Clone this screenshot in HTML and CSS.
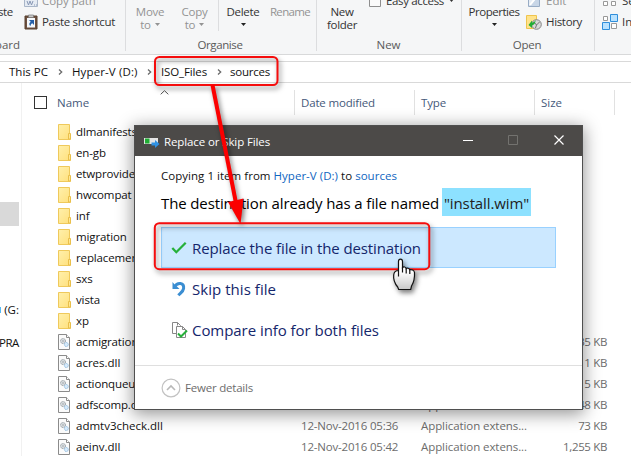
FILE: index.html
```html
<!DOCTYPE html>
<html lang="en">
<head>
<meta charset="utf-8">
<title>Replace or Skip Files</title>
<link rel="stylesheet" href="styles.css">
</head>
<body>
<svg class="defs" width="0" height="0">
  <defs>
    <linearGradient id="fold" x1="0" y1="0" x2="1" y2="1"><stop offset="0" stop-color="#fff0ac"/><stop offset="1" stop-color="#ffe07c"/></linearGradient>
    <linearGradient id="hand" x1="0" y1="0" x2="0" y2="1"><stop offset="0.4" stop-color="#fff"/><stop offset="1" stop-color="#c8c8c8"/></linearGradient>
    <symbol id="folder" viewBox="0 0 14 16"><path d="M.5.5h11v9.300l1 .7v5h-12z" fill="url(#fold)" stroke="#efc95b"/><path d="M10.500 15v-5.500h2V15z" fill="#ffe793" stroke="#e9bf4b"/></symbol>
    <symbol id="dll" viewBox="0 0 14 16"><path d="M.5.5h8l3 3v12H.5z" fill="#fbfbfb" stroke="#8b8b8b"/><path d="M8.500.5v3h3" fill="#fff" stroke="#8b8b8b"/><circle cx="5" cy="7" r="2.500" fill="#dfe3e6" stroke="#8c949a" stroke-dasharray="1.200 .6"/><circle cx="5" cy="7" r=".9" fill="#fff" stroke="#8c949a" stroke-width=".6"/><circle cx="8.300" cy="10.500" r="2" fill="#d7eafa" stroke="#83b3da" stroke-dasharray="1 .6"/></symbol>
    <symbol id="chev" viewBox="0 0 5 8"><path d="M1 1.500 3.700 4 1 6.500" fill="none" stroke="#6b6b6b" stroke-width="1.300"/></symbol>
    <symbol id="caret" viewBox="0 0 5 3"><path d="M0 0h5L2.500 3z" fill="currentColor"/></symbol>
  </defs>
</svg>
<div class="window">
  <div class="ribbon">
    <section class="group clip">
      <div class="cells">
        <span class="ste">ste</span>
        <div class="items">
          <div class="item dim"><svg width="14" height="14" viewBox="0 0 14 14"><path d="M.5 0v12.500h13V0" fill="#e5ebf3" stroke="#a9b6c8"/><path d="m3 7 1.500 4L6 7l1.500 4L9 7M10 11h1M12 11h1" fill="none" stroke="#8898b5"/></svg><span class="t-path">Copy path</span></div>
          <div class="item"><svg width="14" height="16" viewBox="0 0 14 16"><path d="M1 2h12v13H1z" fill="#6e5140" stroke="#57402f"/><path d="M3 4h8v9.500H3z" fill="#f4f8fc"/><path d="M4.500 1h5v2.500h-5z" fill="#c6c6c6" stroke="#777" stroke-width=".7"/><path d="M5 6h5v5L8.300 9.300C7 10 6.600 11 6.500 12.300 4.600 10.500 5.200 8.700 6.700 7.700z" fill="#245fa8"/></svg><span class="t-paste">Paste shortcut</span></div>
        </div>
      </div>
      <div class="label">oard</div>
    </section>
    <section class="group org">
      <div class="bigs">
        <div class="big dim move"><span>Move</span><span>to <svg width="5" height="3"><use href="#caret"/></svg></span></div>
        <div class="big dim copy"><span>Copy</span><span>to <svg width="5" height="3"><use href="#caret"/></svg></span></div>
        <div class="big del"><span>Delete</span><svg width="5" height="3"><use href="#caret"/></svg></div>
        <div class="big dim ren"><span>Rename</span></div>
      </div>
      <div class="label t-org">Organise</div>
    </section>
    <section class="group new">
      <div class="newrow">
        <div class="big"><span>New</span><span>folder</span></div>
        <div class="item easy"><svg width="12" height="12" viewBox="0 0 12 12"><path d="M.5.5h11v11H.5z" fill="#fafafa" stroke="#8e8e8e"/></svg><span>Easy access</span><svg class="up" width="5" height="3"><use href="#caret"/></svg></div>
      </div>
      <div class="label">New</div>
    </section>
    <section class="group open">
      <div class="newrow">
        <div class="big"><span class="t-prop">Properties</span><svg width="5" height="3"><use href="#caret"/></svg></div>
        <div class="items">
          <div class="item dim"><svg width="16" height="14" viewBox="0 0 16 14"><path d="M2.500 0v12.500h11V0" fill="#e7edf5" stroke="#98acc5"/><path d="M3 12 13 2v10z" fill="#c8d6e7"/><path d="m4 11 8-10" stroke="#fff" stroke-width="2"/></svg><span>Edit</span></div>
          <div class="item"><svg width="16" height="16" viewBox="0 0 16 16"><path d="M.5 1.500h10v13H.5z" fill="#ffe38b" stroke="#efc44e"/><circle cx="10.500" cy="10.500" r="4.800" fill="#d9d9d9" stroke="#858585"/><path d="m8 8 2.500 3 3-3M10.500 11l-1 3" fill="none" stroke="#666" stroke-width=".9"/><path d="M2.500 11 6 6.500v2.300c2-.4 3-1.500 3.500-2.800C9.800 9 8 11 6 11.500V14z" fill="#23ad35"/></svg><span class="t-hist">History</span></div>
        </div>
      </div>
      <div class="label">Open</div>
    </section>
    <section class="group sel">
      <div class="items">
        <div class="item"><svg width="16" height="14" viewBox="0 0 16 14"><path d="M1.500 7.500h4v4h-4zM9.500 7.500h4v4h-4z" fill="#fff" stroke="#999"/></svg><span>Se</span></div>
        <div class="item"><svg width="16" height="16" viewBox="0 0 16 16"><path d="M1.500 2.500h4v4h-4zM9.500 9.500h5v5h-5z" fill="#fff" stroke="#999"/><path d="M8.500.5h7v7h-7zM.5 8.500h7v7h-7z" fill="#b9e2ff" stroke="#2f8edb"/></svg><span>In</span></div>
      </div>
    </section>
  </div>
  <div class="address">
    <span class="c1">This PC</span><svg class="a1" width="5" height="8"><use href="#chev"/></svg>
    <span class="c2">Hyper-V (D:)</span><svg class="a2" width="5" height="8"><use href="#chev"/></svg>
    <span class="c3">ISO_Files</span><svg class="a3" width="5" height="8"><use href="#chev"/></svg>
    <span class="c4">sources</span>
  </div>
  <div class="main">
    <nav class="nav">
      <div class="current"></div>
      <div class="drive"><i></i>(G:</div>
      <div class="supra">PRA</div>
    </nav>
    <div class="files">
      <div class="head">
        <div class="h-name"><span class="check"></span>Name<svg class="sort" width="9" height="5" viewBox="0 0 9 5"><path d="M.7 4.300 4.500.7l3.800 3.600" fill="none" stroke="#555"/></svg></div>
        <div class="h-date">Date modified</div><div class="h-type">Type</div><div class="h-size">Size</div>
      </div>
      <div class="row"><svg><use href="#folder"/></svg><span class="name">dlmanifests</span></div>
      <div class="row"><svg><use href="#folder"/></svg><span class="name">en-gb</span></div>
      <div class="row"><svg><use href="#folder"/></svg><span class="name">etwproviders</span></div>
      <div class="row"><svg><use href="#folder"/></svg><span class="name">hwcompat</span></div>
      <div class="row"><svg><use href="#folder"/></svg><span class="name">inf</span></div>
      <div class="row"><svg><use href="#folder"/></svg><span class="name">migration</span></div>
      <div class="row"><svg><use href="#folder"/></svg><span class="name">replacement</span></div>
      <div class="row"><svg><use href="#folder"/></svg><span class="name">sxs</span></div>
      <div class="row"><svg><use href="#folder"/></svg><span class="name">vista</span></div>
      <div class="row"><svg><use href="#folder"/></svg><span class="name">xp</span></div>
      <div class="row"><svg><use href="#dll"/></svg><span class="name">acmigration</span><span class="size">35 KB</span></div>
      <div class="row"><svg><use href="#dll"/></svg><span class="name n0">acres.dll</span><span class="size">1 KB</span></div>
      <div class="row"><svg><use href="#dll"/></svg><span class="name">actionqueue</span><span class="size">5 KB</span></div>
      <div class="row"><svg><use href="#dll"/></svg><span class="name">adfscomp.dll</span><span class="date"></span><span class="type">Application extens...</span><span class="size">48 KB</span></div>
      <div class="row"><svg><use href="#dll"/></svg><span class="name n0">admtv3check.dll</span><span class="date">12-Nov-2016 05:36</span><span class="type">Application extens...</span><span class="size">73 KB</span></div>
      <div class="row"><svg><use href="#dll"/></svg><span class="name n0">aeinv.dll</span><span class="date">12-Nov-2016 05:42</span><span class="type">Application extens...</span><span class="size">1,255 KB</span></div>
    </div>
  </div>

  <div class="dialog">
    <div class="bar">
      <svg width="16" height="12" viewBox="0 0 16 12"><path d="M0 2h14v6H0z" fill="#e4e4e4"/><path d="M1 2.500h4.500v5H1z" fill="#1fae33"/><path d="M7.500 6.500h3.500V4l4.500 4-4.500 4V9.500H7.500z" fill="#2f91e2"/></svg>
      <span class="t-title">Replace or Skip Files</span>
      <svg class="ctl" width="101" height="12" viewBox="0 0 101 12"><path d="M0 6.500h10" stroke="#fff"/><path d="M45.500 1.500h9v9h-9z" fill="none" stroke="#73726f"/><path d="m91.500 1.500 9 9m0-9-9 9" stroke="#fff" stroke-width="1.200"/></svg>
    </div>
    <div class="body">
      <div class="copying">Copying 1 item from <a>Hyper-V (D:)</a> to <a>sources</a></div>
      <div class="msg"><span>The destination already has a file named</span><mark>"install.wim"</mark></div>
      <div class="opt hot"><svg width="18" height="16" viewBox="0 0 18 16"><path d="m2.300 8 4 4.200 9.400-9.400" fill="none" stroke="#27b03a" stroke-width="2.300"/></svg><span>Replace the file in the destination</span></div>
      <div class="opt"><svg width="18" height="18" viewBox="0 0 18 18"><path d="M4.500 6.800C7.500 2 14.300 2.500 13.600 8.500 13.200 11.500 11 12.500 8.300 15.300" fill="none" stroke="#3b8ed2" stroke-width="3"/><path d="M2.500 2v7h7L7.500 7 5 5z" fill="#3b8ed2"/></svg><span class="t-skip">Skip this file</span></div>
      <div class="opt"><svg width="18" height="18" viewBox="0 0 18 18"><path d="M2.500 1.500h5l3 3v8h-8z" fill="#fff" stroke="#888"/><path d="M6.500 5.500h6l3 3v8h-9z" fill="#fff" stroke="#888"/><path d="M12.500 5.500v3h3M7.500 1.500v3" fill="none" stroke="#888"/><path d="m8 12.500 3 3 6-6" fill="none" stroke="#27b03a" stroke-width="2"/></svg><span class="t-comp">Compare info for both files</span></div>
    </div>
    <div class="foot"><svg width="20" height="20" viewBox="0 0 20 20"><circle cx="10" cy="10" r="8.900" fill="none" stroke="#c2c2c2" stroke-width="1.200"/><path d="m6 12 4-4 4 4" fill="none" stroke="#b8b8b8" stroke-width="1.600"/></svg><span>Fewer details</span></div>
  </div>

  <svg class="marks" width="631" height="456" viewBox="0 0 631 456">
    <g class="shade">
      <rect x="155" y="57" width="122.500" height="28" rx="4.500" fill="none" stroke="#f50d0d" stroke-width="2"/>
      <rect x="154.800" y="223.200" width="274.500" height="46" rx="4.500" fill="none" stroke="#f50d0d" stroke-width="2"/>
      <path d="M212.500 85 236 203" stroke="#fb0000" stroke-width="4"/>
      <path d="m228 202 15.500-3.500L240.500 224z" fill="#fb0000"/>
    </g>
    <g class="shade"><path d="M398.500 276.500v-15c0-3.300 4-3.300 4 0v6c1-1 3.300-.6 3.600 1 1.200-.8 3.300-.3 3.600 1.300 1.500-.6 4.500.2 4.800 2.700.3 5-.2 9-3 13.500l-.8 3.500h-12l-1-2.500c-3-3.500-4.500-7.500-4-12 .3-3 2.300-4.500 4.800-4.500z" fill="url(#hand)" stroke="#111" stroke-width="1.200"/><path d="M402.500 267v5.500M406.200 268.500v5M409.800 269.500v4.500" stroke="#111" stroke-width="1.200"/></g>
  </svg>
</div>
</body>
</html>
```
FILE: styles.css
```css
* { box-sizing: border-box; }
body { margin: 0; background: #fff; font: 11.5px/13px "Open Sans", sans-serif; color: #111; overflow: hidden; }
svg { display: block; flex: none; overflow: visible; }
.defs { position: absolute; }
.window { position: relative; width: 631px; height: 456px; overflow: hidden; white-space: nowrap; }
.dim { color: #939393; }

.ribbon { display: flex; height: 55px; background: #f5f6f7; border-bottom: 1px solid #d8d9da; color: #333; }
.group { display: flex; flex-direction: column; justify-content: space-between; height: 51px; border-right: 1px solid #dcdddf; flex: none; }
.group.sel { border: 0; flex: 1; overflow: hidden; }
.label { color: #5a5a5a; text-align: center; line-height: 13px; }
.items { display: flex; flex-direction: column; }
.item { display: flex; align-items: center; gap: 4px; height: 21px; }
.items .item:first-child { margin-top: -10px; }
.clip { width: 126px; }
.clip .label { text-align: left; margin-left: -5px; }
.cells { display: flex; }
.ste { width: 24px; padding-top: 5px; margin-left: -2px; margin-right: 2px; letter-spacing: -.4px; }
.t-path { letter-spacing: -.1px; }
.t-paste { letter-spacing: -.3px; }
.t-org { letter-spacing: -.4px; padding-right: 2px; }
.t-prop { letter-spacing: -.47px; }
.t-hist { letter-spacing: -.33px; }
.org { width: 191px; padding-top: 5px; }
.bigs { display: flex; }
.big { display: flex; flex-direction: column; align-items: center; text-align: center; letter-spacing: -.3px; }
.big > span { display: flex; align-items: center; gap: 4px; }
.big > svg { margin-top: 5px; color: #222; }
.move { width: 48px; }
.copy { width: 45px; border-right: 1px solid #dcdddf; margin-top: -5px; padding: 5px 3px 0 0; }
.del { width: 48px; }
.ren { width: 49px; letter-spacing: -.65px; padding-right: 3px; }
.new { width: 145px; }
.newrow { display: flex; height: 32px; }
.newrow .big { padding-top: 5px; }
.new .big { width: 50px; }
.easy { margin: -10px 0 0 2px; gap: 5px; letter-spacing: -.35px; }
.easy .up { margin-top: -1px; }
.open { width: 133px; }
.open .big { width: 64px; }
.new .label { padding-right: 1px; }
.open .label { padding-right: 2px; letter-spacing: -.2px; }
.sel .items { padding-left: 7px; }

.address { display: flex; align-items: center; height: 22px; margin-top: 6px; padding: 0 0 1px 9px; border: 1px solid #d9d9d9; border-width: 1px 0; color: #111; }
.address svg { margin: 1px 9px 0 10px; }
.address .a1 { margin-right: 9px; }
.address .a3 { margin-right: 8px; }
.c1 { width: 39px; }
.c2 { width: 65px; letter-spacing: .12px; }
.c3 { width: 46px; letter-spacing: -.13px; }
.c4 { width: 40px; letter-spacing: -.22px; }

.main { display: flex; height: 373px; }
.nav { width: 22px; height: 373px; border-right: 1px solid #f1f1f1; padding-right: 2px; overflow: hidden; flex: none; }
.current { height: 24px; margin: 119px 0 0; background: #d9d9d9; }
.drive { display: flex; height: 14px; margin-top: 77px; gap: 4px; }
.drive i { width: 1px; height: 6px; margin-top: 4px; background: #55b9f3; }
.supra { margin-top: 19px; letter-spacing: -.5px; margin-left: -1px; }
.files { flex: 1; padding-top: 7px; }
.head { display: flex; height: 25px; color: #45597a; line-height: 25px; margin-bottom: 6px; }
.head > div { border-right: 1px solid #e1e1e1; padding-left: 6px; }
.h-name { position: relative; width: 273px; display: flex; align-items: center; }
.head > .h-name { padding-left: 12px; }
.check { width: 13px; height: 13px; border: 1px solid #333; margin-right: 10px; }
.sort { position: absolute; left: 138px; top: 0; }
.h-date { width: 120px; letter-spacing: -.16px; }
.h-type { width: 120px; letter-spacing: -.15px; }
.h-size { width: 80px; }
.row { display: flex; align-items: center; height: 21px; padding-left: 36px; color: #6d6d6d; }
.row svg { width: 14px; height: 16px; margin-right: 4px; }
.name { width: 225px; color: #111; letter-spacing: -.13px; }
.n0 { letter-spacing: 0; }
.date { width: 120px; letter-spacing: -.19px; }
.type { width: 120px; letter-spacing: -.08px; }
.size { margin-left: auto; margin-right: 24px; letter-spacing: -.35px; }

.dialog { position: absolute; left: 134px; top: 125px; width: 449px; height: 285px; background: #fff; border: 1px solid #4f4f4f; box-shadow: 0 3px 16px 1px rgba(0,0,0,.42); }
.bar { display: flex; align-items: center; height: 30px; background: #4c4a48; color: #fff; padding: 0 18px 0 9px; }
.bar > svg:first-child { margin-top: 1px; }
.t-title { margin-left: 4px; letter-spacing: -.11px; flex: 1; }
.ctl { margin-top: -2px; }
.body { padding: 13px 26px 0; height: 209px; }
.copying { letter-spacing: .03px; line-height: 13px; }
.copying a { color: #1066bf; }
.msg { display: flex; align-items: center; height: 28px; margin: 6px 0 11px; font-size: 15px; line-height: 20px; letter-spacing: -.12px; color: #000; }
.msg span { width: 281px; padding-top: 2px; }
.msg mark { width: 89px; height: 28px; line-height: 31px; padding-left: 2px; background: #8de1ff; color: #222; }
.opt { display: flex; align-items: center; gap: 4px; width: 395px; height: 41px; padding-left: 8px; color: #14266b; font-size: 15px; letter-spacing: -.11px; border: 1px solid transparent; }
.opt span { padding-top: 2px; }
.hot { background: #cce8ff; border-color: #99d1ff; }
.t-skip { letter-spacing: .05px; }
.t-comp { letter-spacing: -.05px; }
.foot { display: flex; align-items: center; gap: 4px; height: 44px; border-top: 1px solid #dfdfdf; padding-left: 26px; color: #6d6d6d; letter-spacing: -.21px; }
.marks { position: absolute; left: 0; top: 0; }
.shade { filter: drop-shadow(2px 3px 2.5px rgba(0,0,0,.5)); }
```
